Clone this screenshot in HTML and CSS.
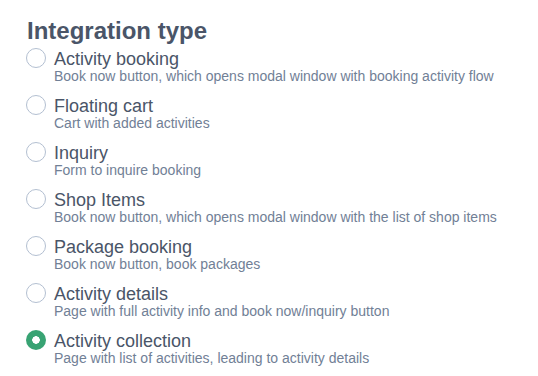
FILE: index.html
```html
<!DOCTYPE html>
<html>
<head>
<meta charset="utf-8">
<link rel="stylesheet" href="styles.css">
</head>
<body>
<div class="panel">
  <h2 class="title">Integration type</h2>
  <ul class="options">
    <li class="option"><span class="radio"></span><div class="text"><div class="label">Activity booking</div><div class="desc">Book now button, which opens modal window with booking activity flow</div></div></li>
    <li class="option"><span class="radio"></span><div class="text"><div class="label">Floating cart</div><div class="desc">Cart with added activities</div></div></li>
    <li class="option"><span class="radio"></span><div class="text"><div class="label">Inquiry</div><div class="desc">Form to inquire booking</div></div></li>
    <li class="option"><span class="radio"></span><div class="text"><div class="label">Shop Items</div><div class="desc">Book now button, which opens modal window with the list of shop items</div></div></li>
    <li class="option"><span class="radio"></span><div class="text"><div class="label">Package booking</div><div class="desc">Book now button, book packages</div></div></li>
    <li class="option"><span class="radio"></span><div class="text"><div class="label">Activity details</div><div class="desc">Page with full activity info and book now/inquiry button</div></div></li>
    <li class="option"><span class="radio checked"></span><div class="text"><div class="label">Activity collection</div><div class="desc">Page with list of activities, leading to activity details</div></div></li>
  </ul>
</div>
</body>
</html>
```

FILE: styles.css
```css
html, body {
  margin: 0;
  padding: 0;
  background: #fff;
}
body {
  font-family: "Liberation Sans", Arial, sans-serif;
}
.panel {
  padding: 17px 26px 0 26px;
}
.title {
  margin: 0 0 3px 1px;
  font-size: 24px;
  line-height: 28px;
  font-weight: bold;
  color: #4a5568;
}
.options {
  list-style: none;
  margin: 0;
  padding: 0;
  display: flex;
  flex-direction: column;
}
.option {
  display: flex;
  align-items: flex-start;
  gap: 8px;
  height: 47px;
}
.radio {
  flex: none;
  width: 18px;
  height: 18px;
  border: 1px solid #b3bfd1;
  border-radius: 50%;
  box-sizing: content-box;
  background: #fff;
}
.radio.checked {
  width: 20px;
  height: 20px;
  border: none;
  background: radial-gradient(circle, #fff 0 3.5px, #38a373 4px);
}
.label {
  font-size: 18px;
  line-height: 20px;
  color: #4a5568;
  margin-top: 1px;
}
.desc {
  font-size: 14px;
  line-height: 15px;
  color: #718096;
}
```
